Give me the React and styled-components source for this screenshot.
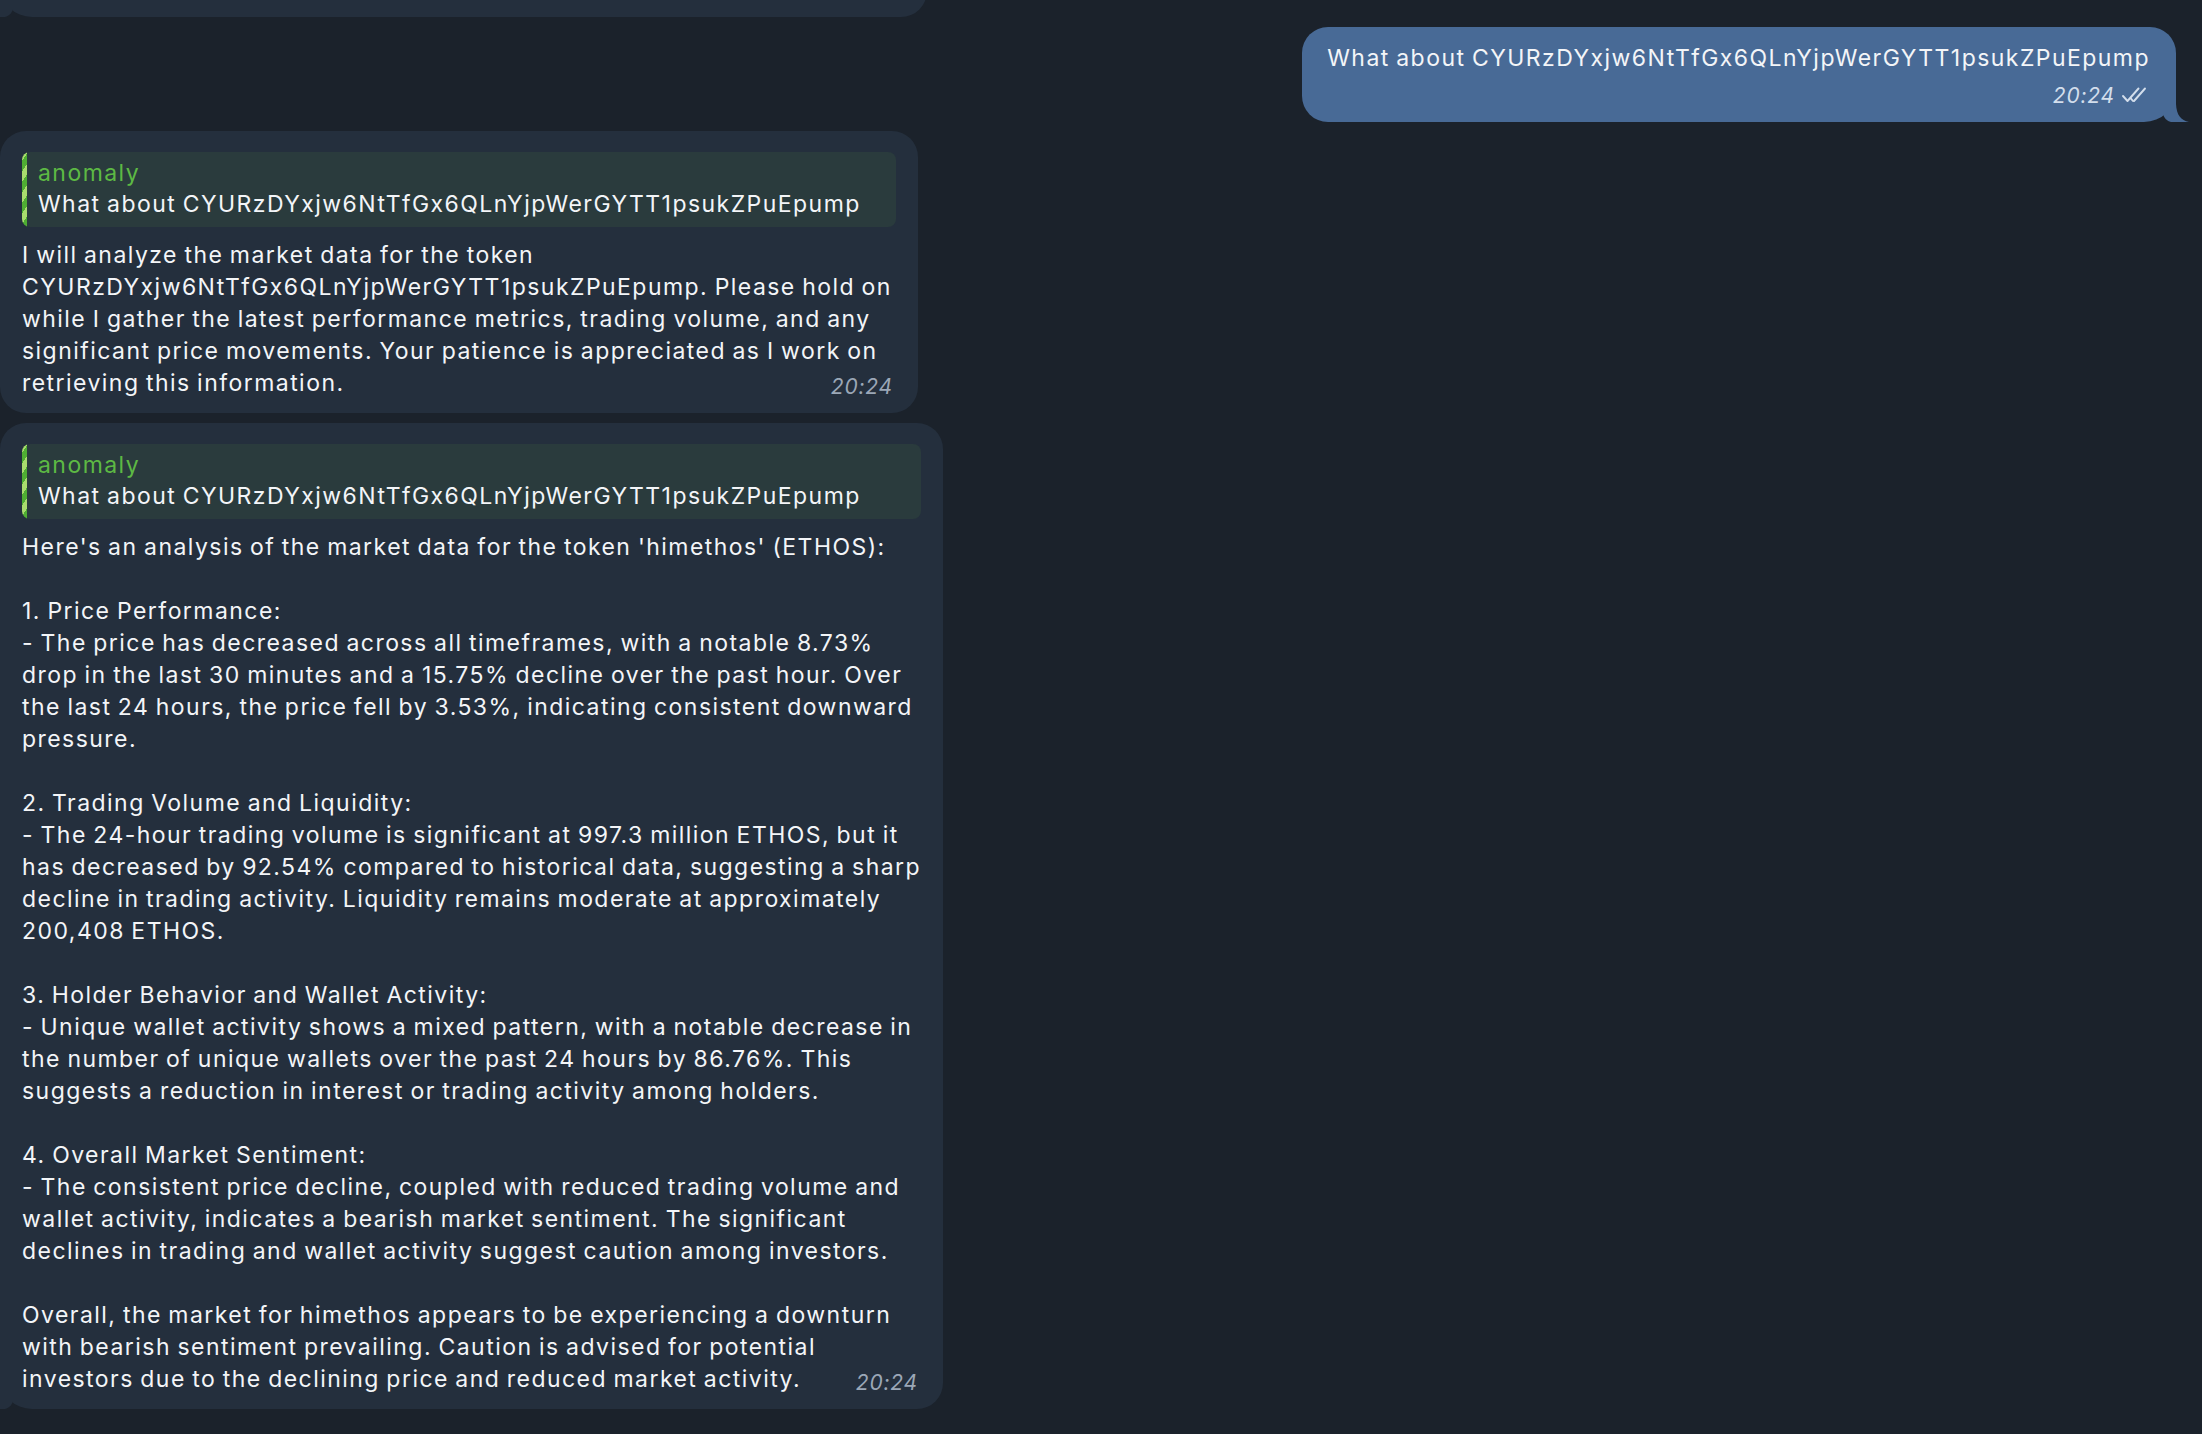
import React from 'react';
import styled, { createGlobalStyle, css } from 'styled-components';

const Global = createGlobalStyle`
  html, body {
    margin: 0;
    padding: 0;
    background: #1b222b;
  }
  body {
    width: 2202px;
    height: 1434px;
    overflow: hidden;
    font-family: Inter, "Noto Sans", sans-serif;
    -webkit-font-smoothing: antialiased;
  }
`;

const textFace = css`
  font-size: 23px;
  letter-spacing: 1.45px;
  word-spacing: -1.4px;
`;

const Chat = styled.main`
  display: flex;
  flex-direction: column;
  gap: 9.5px;
  height: 1434px;
  overflow: hidden;
`;

const Row = styled.div`
  display: flex;
  justify-content: ${(p) => (p.$out ? 'flex-end' : 'flex-start')};
  padding-right: ${(p) => (p.$out ? '26px' : '0')};
  margin-top: ${(p) => p.$offset || 0}px;
  flex-shrink: 0;
`;

const Bubble = styled.div`
  position: relative;
  box-sizing: border-box;
  width: ${(p) => (p.$width ? `${p.$width}px` : 'auto')};
  background: ${(p) => (p.$out ? '#486a96' : '#242f3d')};
  border-radius: 26px;
  ${(p) => p.$tail && (p.$out ? 'border-bottom-right-radius: 32px;' : 'border-bottom-left-radius: 32px;')}
  padding: 15px ${(p) => (p.$out ? '26px' : '22px')} ${(p) => (p.$out ? '48px' : '14px')} ${(p) => (p.$out ? '25px' : '22px')};
  color: #f3f5f8;
`;

const Text = styled.div`
  ${textFace}
  line-height: 32px;
  white-space: pre;
`;

const Quote = styled.div`
  position: relative;
  margin-top: 6px;
  margin-bottom: 12px;
  padding: 6px 12px 7px 16px;
  border-radius: 8px;
  background: #2a3b3d;
  overflow: hidden;
  &::before {
    content: '';
    position: absolute;
    left: 0;
    top: 0;
    bottom: 0;
    width: 5px;
    background: repeating-linear-gradient(
      -55deg,
      #4fae33 0 6px,
      #a9dc6e 6px 12px
    );
  }
`;

const QuoteName = styled.div`
  ${textFace}
  line-height: 31px;
  color: #5db944;
`;

const QuoteText = styled.div`
  ${textFace}
  line-height: 31px;
  color: #f3f5f8;
  white-space: pre;
`;

const Meta = styled.div`
  position: absolute;
  right: 25px;
  bottom: 16px;
  display: flex;
  align-items: center;
  gap: 6px;
  font-size: 21px;
  line-height: 21px;
  letter-spacing: 0.8px;
  font-style: italic;
  color: ${(p) => (p.$out ? '#d3deec' : '#9ba7b7')};
`;

const Tail = styled.svg`
  position: absolute;
  bottom: 0;
  width: 27px;
  height: 34px;
  ${(p) => (p.$out ? 'right: -13px;' : 'left: -13px; transform: scaleX(-1);')}
  fill: ${(p) => (p.$out ? '#486a96' : '#242f3d')};
`;

const Checks = styled.svg`
  width: 30px;
  height: 16px;
  stroke: #d3deec;
  fill: none;
  stroke-width: 1.9;
  stroke-linecap: round;
  stroke-linejoin: round;
`;

const TailShape = ({ out }) => (
  <Tail $out={out} viewBox="-14 -34 27 34">
    <path d="M -5 0 C -9 -1 -12 -4 -13 -8 L -13 -34 L 0 -34 L 0 -18 C 0.5 -7 5 -1.5 13 0 Z" />
  </Tail>
);

const DoubleCheck = () => (
  <Checks viewBox="0 0 30 16">
    <path d="M2 9 L6.5 14 L17.5 1.5" />
    <path d="M13 14 L24 1.5" />
    <path d="M9.8 11.3 L12 14" />
  </Checks>
);

const msgQuote = 'What about CYURzDYxjw6NtTfGx6QLnYjpWerGYTT1psukZPuEpump';

const prevText = `Let me know if you would like a deeper look at any specific metric,
such as the holder distribution, liquidity pools, or recent large
transactions, and I will prepare a separate report for you shortly.`;

const reply1 = `I will analyze the market data for the token
CYURzDYxjw6NtTfGx6QLnYjpWerGYTT1psukZPuEpump. Please hold on
while I gather the latest performance metrics, trading volume, and any
significant price movements. Your patience is appreciated as I work on
retrieving this information.`;

const reply2 = `Here's an analysis of the market data for the token 'himethos' (ETHOS):

1. Price Performance:
- The price has decreased across all timeframes, with a notable 8.73%
drop in the last 30 minutes and a 15.75% decline over the past hour. Over
the last 24 hours, the price fell by 3.53%, indicating consistent downward
pressure.

2. Trading Volume and Liquidity:
- The 24-hour trading volume is significant at 997.3 million ETHOS, but it
has decreased by 92.54% compared to historical data, suggesting a sharp
decline in trading activity. Liquidity remains moderate at approximately
200,408 ETHOS.

3. Holder Behavior and Wallet Activity:
- Unique wallet activity shows a mixed pattern, with a notable decrease in
the number of unique wallets over the past 24 hours by 86.76%. This
suggests a reduction in interest or trading activity among holders.

4. Overall Market Sentiment:
- The consistent price decline, coupled with reduced trading volume and
wallet activity, indicates a bearish market sentiment. The significant
declines in trading and wallet activity suggest caution among investors.

Overall, the market for himethos appears to be experiencing a downturn
with bearish sentiment prevailing. Caution is advised for potential
investors due to the declining price and reduced market activity.`;

const ReplyQuote = () => (
  <Quote>
    <QuoteName>anomaly</QuoteName>
    <QuoteText>{msgQuote}</QuoteText>
  </Quote>
);

export default function App() {
  return (
    <>
      <Global />
      <Chat>
        <Row $offset={-108}>
          <Bubble $width={927} $tail>
            <Text>{prevText}</Text>
            <Meta>20:23</Meta>
            <TailShape />
          </Bubble>
        </Row>
        <Row $out>
          <Bubble $out $tail>
            <Text>{msgQuote}</Text>
            <Meta $out>
              20:24
              <DoubleCheck />
            </Meta>
            <TailShape out />
          </Bubble>
        </Row>
        <Row>
          <Bubble $width={918}>
            <ReplyQuote />
            <Text>{reply1}</Text>
            <Meta>20:24</Meta>
          </Bubble>
        </Row>
        <Row>
          <Bubble $width={943} $tail>
            <ReplyQuote />
            <Text>{reply2}</Text>
            <Meta>20:24</Meta>
            <TailShape />
          </Bubble>
        </Row>
      </Chat>
    </>
  );
}
